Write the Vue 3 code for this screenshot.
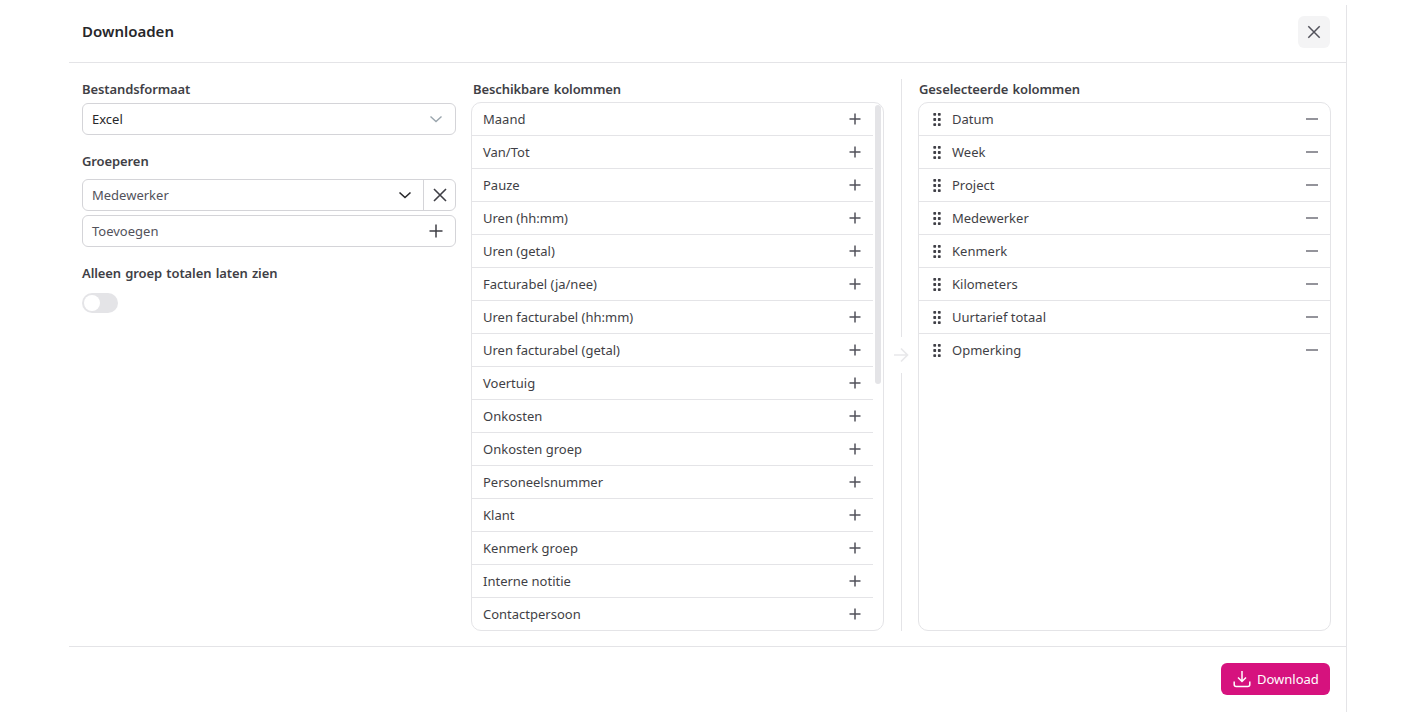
<script setup>
const available = ['Maand','Van/Tot','Pauze','Uren (hh:mm)','Uren (getal)','Facturabel (ja/nee)','Uren facturabel (hh:mm)','Uren facturabel (getal)','Voertuig','Onkosten','Onkosten groep','Personeelsnummer','Klant','Kenmerk groep','Interne notitie','Contactpersoon']
const selected = ['Datum','Week','Project','Medewerker','Kenmerk','Kilometers','Uurtarief totaal','Opmerking']
</script>

<template>
  <div class="page">
    <div class="modal">
      <header class="head">
        <h2>Downloaden</h2>
        <button class="close" aria-label="Sluiten">
          <svg width="20" height="20" viewBox="0 0 20 20"><path d="M4.3 4.3l11.4 11.4M15.7 4.3L4.3 15.7" stroke="#52525b" stroke-width="1.5" fill="none"/></svg>
        </button>
      </header>
      <main class="body">
        <section class="col-left">
          <label class="lbl">Bestandsformaat</label>
          <div class="field">
            <span class="val-dark">Excel</span>
            <svg class="ic" width="16" height="16" viewBox="0 0 16 16"><path d="M2.5 5.5L8 10.5l5.5-5" stroke="#9aa5ad" stroke-width="1.4" fill="none"/></svg>
          </div>
          <label class="lbl second">Groeperen</label>
          <div class="group-row">
            <div class="group-sel">
              <span>Medewerker</span>
              <svg width="16" height="16" viewBox="0 0 16 16"><path d="M2.5 5.5L8 10.5l5.5-5" stroke="#27272a" stroke-width="1.6" fill="none"/></svg>
            </div>
            <div class="group-x">
              <svg width="16" height="16" viewBox="0 0 16 16"><path d="M2 2l12 12M14 2L2 14" stroke="#3f3f46" stroke-width="1.6" fill="none"/></svg>
            </div>
          </div>
          <div class="field add">
            <span>Toevoegen</span>
            <svg width="16" height="16" viewBox="0 0 16 16"><path d="M8 1.5v13M1.5 8h13" stroke="#3f3f46" stroke-width="1.5" fill="none"/></svg>
          </div>
          <label class="lbl third">Alleen groep totalen laten zien</label>
          <div class="toggle"><span class="knob"></span></div>
        </section>

        <section class="col-list first">
          <label class="lbl">Beschikbare kolommen</label>
          <div class="list avail">
            <div class="rows">
              <div v-for="c in available" :key="c" class="row">
                <span>{{ c }}</span>
                <svg class="plus" width="12" height="12" viewBox="0 0 12 12"><path d="M6 .5v11M.5 6h11" stroke="#52525b" stroke-width="1.5" fill="none"/></svg>
              </div>
            </div>
            <div class="thumb"></div>
          </div>
        </section>

        <div class="divider">
          <span class="arrow">
            <svg width="16" height="16" viewBox="0 0 16 16"><path d="M1 8h13.5M8 1.5L14.5 8 8 14.5" stroke="#e8e8ea" stroke-width="1.7" fill="none"/></svg>
          </span>
        </div>

        <section class="col-list">
          <label class="lbl">Geselecteerde kolommen</label>
          <div class="list">
            <div v-for="c in selected" :key="c" class="row sel">
              <svg class="grip" width="8" height="13" viewBox="0 0 8 13" fill="#3f3f46">
                <rect x=".3" y="0" width="2.8" height="2.8" rx=".7"/><rect x="4.9" y="0" width="2.8" height="2.8" rx=".7"/>
                <rect x=".3" y="5.1" width="2.8" height="2.8" rx=".7"/><rect x="4.9" y="5.1" width="2.8" height="2.8" rx=".7"/>
                <rect x=".3" y="10.2" width="2.8" height="2.8" rx=".7"/><rect x="4.9" y="10.2" width="2.8" height="2.8" rx=".7"/>
              </svg>
              <span class="name">{{ c }}</span>
              <svg class="minus" width="12" height="12" viewBox="0 0 12 12"><path d="M0 6h12" stroke="#71717a" stroke-width="1.5" fill="none"/></svg>
            </div>
          </div>
        </section>
      </main>
      <footer class="foot">
        <button class="dl">
          <svg width="18" height="18" viewBox="0 0 18 18" fill="none" stroke="#fff" stroke-width="1.5"><path d="M9 1v10.5M5 7.5l4 4 4-4"/><path d="M1.2 11.5v3a2 2 0 0 0 2 2h11.6a2 2 0 0 0 2-2v-3"/></svg>
          <span>Download</span>
        </button>
      </footer>
    </div>
  </div>
</template>

<style>
html, body { margin: 0; background: #fff; }
</style>

<style scoped>
.page {
  height: 712px;
  box-sizing: border-box;
  padding: 5px 69px 0 69px;
  font-family: "Noto Sans", Inter, sans-serif;
  font-size: 13px;
  color: #3f3f46;
  overflow: hidden;
}
.modal {
  width: 1278px;
  height: 707px;
  box-sizing: border-box;
  border-right: 1px solid #e4e4e7;
  display: flex;
  flex-direction: column;
}
.head {
  height: 58px;
  flex: none;
  box-sizing: border-box;
  border-bottom: 1px solid #e4e4e7;
  display: flex;
  align-items: center;
  justify-content: space-between;
  padding: 0 16px 4px 13px;
}
.head h2 { margin: 0 0 2px; font-size: 15px; font-weight: 600; color: #27272a; }
.close {
  width: 32px; height: 32px; border: 0; border-radius: 6px; background: #f4f4f5; padding: 0;
  display: flex; align-items: center; justify-content: center;
}
.body {
  height: 583px;
  flex: none;
  box-sizing: border-box;
  padding: 16px 15px 15px 13px;
  display: grid;
  grid-template-columns: 374px 428px 34px 413px;
}
.lbl { display: block; height: 23px; line-height: 20px; font-weight: 600; color: #3f3f46; letter-spacing: -0.1px; word-spacing: 1px; }
.col-left > .lbl:first-child { height: 24px; }
.col-left .field { width: 374px; }
.field {
  height: 32px; box-sizing: border-box; border: 1px solid #d4d4d8; border-radius: 6px;
  display: flex; align-items: center; justify-content: space-between; padding: 0 11px 0 9px;
  color: #52525b;
}
.val-dark { color: #27272a; }
.second { margin-top: 16px; height: 28px; }
.group-row {
  width: 374px; height: 32px; box-sizing: border-box; display: flex;
  border: 1px solid #d4d4d8; border-radius: 6px; color: #52525b;
}
.group-sel { flex: 1; display: flex; align-items: center; justify-content: space-between; padding: 0 10px 0 9px; }
.group-x { width: 31px; flex: none; border-left: 1px solid #d4d4d8; display: flex; align-items: center; justify-content: center; }
.add { margin-top: 4px; padding-right: 11px; }
.third { margin-top: 16px; height: 30px; }
.toggle { width: 36px; height: 20px; border-radius: 10px; background: #e4e4e7; padding: 2px; box-sizing: border-box; }
.knob { display: block; width: 16px; height: 16px; border-radius: 50%; background: #fff; }

.col-list { width: 413px; min-width: 0; }
.col-list .lbl { padding-left: 1px; }
.col-list.first { margin-left: 15px; }
.col-list.first .lbl { padding-left: 2px; }

.list {
  position: relative; height: 529px; box-sizing: border-box;
  border: 1px solid #e4e4e7; border-radius: 10px; overflow: hidden;
}
.avail { padding-right: 10px; }
.rows { height: 100%; overflow: hidden; }
.row {
  height: 33px; box-sizing: border-box; border-bottom: 1px solid #e4e4e7;
  display: flex; align-items: center; padding: 0 12px 0 11px; color: #3f3f46;
}
.row > span:first-child { flex: 1; }
.row:last-child { border-bottom: 0; padding-bottom: 1px; }
.sel { padding: 0 12px 0 14px; }
.sel:last-child { border-bottom: 1px solid transparent; padding-bottom: 0; }
.name { flex: 1; margin-left: 11px; }
.plus { flex: none; }
.thumb {
  position: absolute; right: 2px; top: 2px; width: 6px; height: 279px;
  border-radius: 3px; background: #e4e4e7;
}

.divider { position: relative; display: flex; justify-content: center; }
.divider::before { content: ""; width: 1px; background: #e4e4e7; height: 552px; }
.arrow {
  position: absolute; left: 50%; top: 258px; transform: translateX(-50%);
  width: 20px; height: 36px; background: #fff; display: flex; align-items: center; justify-content: center;
}

.foot {
  flex: 1; box-sizing: border-box; border-top: 1px solid #e4e4e7;
  display: flex; justify-content: flex-end; align-items: flex-start;
  padding: 16px 16px 0 0;
}
.dl {
  height: 32px; width: 109px; border: 0; border-radius: 6px; background: #d6127e; color: #fff;
  display: flex; align-items: center; justify-content: flex-start; gap: 6px;
  font: 400 13px "Noto Sans", Inter, sans-serif; padding: 0 0 0 12px;
}
</style>
